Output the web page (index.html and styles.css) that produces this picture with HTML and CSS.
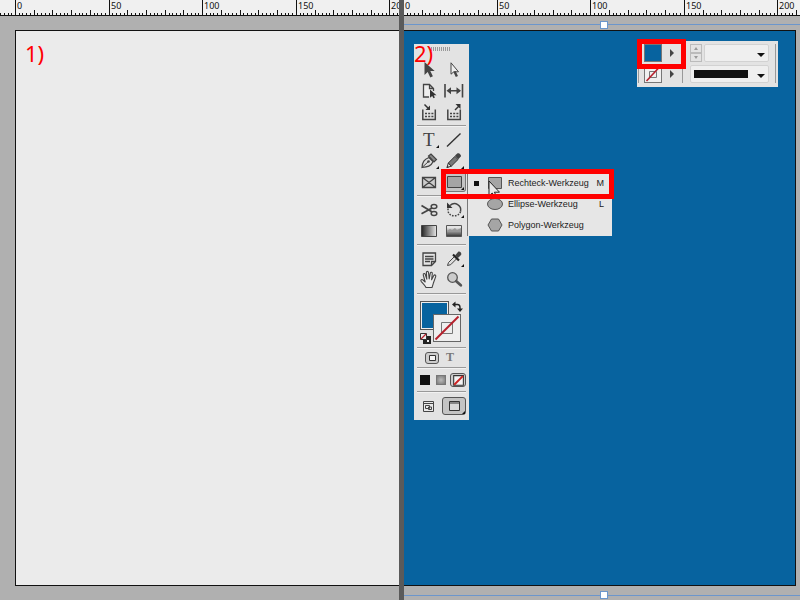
FILE: index.html
```html
<!DOCTYPE html>
<html lang="de">
<head>
    <meta charset="UTF-8">
    <meta name="viewport" content="width=device-width, initial-scale=1.0">
    <title>Rechteck-Werkzeug</title>
    <link rel="stylesheet" href="styles.css">
</head>
<body>
    <!-- Schritt 1: leere Seite -->
    <section class="pane">
        <svg class="ruler" data-origin="15"></svg>
        <div class="page">
            <span class="step">1)</span>
        </div>
    </section>

    <div class="divider"></div>

    <!-- Schritt 2: Seite mit blauem Rechteck -->
    <section class="pane pane-right">
        <svg class="ruler" data-origin="-1"></svg>
        <div class="page page-blue"></div>
        <div class="frame"></div>

        <!-- Werkzeugleiste -->
        <div class="toolbox">
            <div class="grip"></div>
            <div class="tools">
                <button aria-label="Auswahl"><svg viewBox="0 0 25 21"><path fill="#444" d="M8.5 3v13l3.2-3 2.6 5.5 2.6-1.2-2.6-5.2h4.4z"/></svg></button>
                <button aria-label="Direktauswahl"><svg viewBox="0 0 25 21"><path fill="#eee" stroke="#444" d="M10 3.800v11.400l2.800-2.400h4.700z"/><path stroke="#444" stroke-width="2.400" d="M13.500 12.500l2.400 5"/></svg></button>
                <button aria-label="Seite"><svg viewBox="0 0 25 21"><path fill="#eee" stroke="#444" stroke-width="1.300" d="M13 17H7.500V4.500h6l4 4V11M13.500 4.500v4h4"/><path fill="#333" d="M14 9.500v8.300l2.200-1.900 1.300 2.400 1.400-.8-1.200-2.300h2.800z"/></svg></button>
                <button aria-label="Lücke"><svg viewBox="0 0 25 21"><path stroke="#444" stroke-width="1.600" d="M4 4v13.500M21.500 4v13.500M7 10.700h12"/><path fill="#444" d="M5.500 10.700l4.500-3.500v7zM20 10.700l-4.500-3.500v7z"/></svg></button>
                <button aria-label="Inhaltsaufnahme"><svg viewBox="0 0 25 21"><path fill="none" stroke="#444" stroke-width="1.500" d="M6.800 8.500v10h12.500v-10"/><path stroke="#444" stroke-width="1.500" stroke-dasharray="2 1.200" d="M9 12.500h8.500M9 15.500h8.500"/><path stroke="#333" stroke-width="1.500" d="M8.500 3.500l3.500 3.500"/><path fill="#333" d="M14 9V4.500L9.500 9z"/></svg></button>
                <button aria-label="Inhaltsplatzierung"><svg viewBox="0 0 25 21"><path fill="none" stroke="#444" stroke-width="1.500" d="M6.800 8.500v10h12.500v-10"/><path stroke="#444" stroke-width="1.500" stroke-dasharray="2 1.200" d="M9 12.500h8.500M9 15.500h8.500"/><path stroke="#333" stroke-width="1.500" d="M14 9l4-4"/><path fill="#333" d="M19.500 3v5l-5-5z"/></svg></button>
            </div>
            <hr>
            <div class="tools">
                <button class="more" aria-label="Text"><svg viewBox="0 0 25 21"><text class="type-icon" x="7" y="17">T</text></svg></button>
                <button aria-label="Linienzeichner"><svg viewBox="0 0 25 21"><path stroke="#333" stroke-width="1.400" d="M6 17.500L19.500 4.500"/></svg></button>
                <button class="more" aria-label="Zeichenstift"><svg viewBox="0 0 25 21"><path fill="#ddd" stroke="#444" stroke-width="1.200" d="M6 17.500c.5-5.500 2-8 7-10l4 4.200c-2 4.500-5.500 5.300-11 5.800z"/><path stroke="#444" d="M6 17.500l6.500-6"/><circle cx="12.500" cy="11.500" r="1.300" fill="#444"/><path fill="#888" stroke="#444" stroke-width="1.200" d="M12.500 6l2.500-2 5.500 5.500-2.500 2.500z"/></svg></button>
                <button class="more" aria-label="Buntstift"><svg viewBox="0 0 25 21"><path fill="#ddd" stroke="#333" d="M6 17.500l1.300-4.500 3 3.200z"/><path fill="#777" stroke="#333" d="M7.300 13l6.700-6.700 3 3.200-6.700 6.700z"/><path fill="#444" d="M14 5.500l2.500-2.200c1.500-.8 4.200 1.700 3.300 3.300l-2.500 2.600z"/><path fill="#333" d="M5.500 18l.8-2.300 1.600 1.600z"/></svg></button>
                <button aria-label="Rechteckrahmen"><svg viewBox="0 0 25 21"><path fill="#ccc" stroke="#444" stroke-width="1.300" d="M6.500 6.500h13v10h-13zM6.500 6.500l13 10M19.500 6.500l-13 10"/></svg></button>
                <button class="more active" aria-label="Rechteck"><svg viewBox="0 0 25 21"><path fill="#a5a5a5" stroke="#444" d="M6.500 5.500h14v11h-14z"/></svg></button>
            </div>
            <hr>
            <div class="tools">
                <button aria-label="Schere"><svg viewBox="0 0 25 21"><path stroke="#444" stroke-width="1.800" d="M5.500 6.500L17 13.500M5.500 14.800L17 8.500"/><g fill="#e3e3e3" stroke="#444" stroke-width="1.500"><ellipse cx="18" cy="7.500" rx="2.800" ry="2"/><ellipse cx="18" cy="14.500" rx="2.800" ry="2"/></g></svg></button>
                <button class="more" aria-label="Drehen"><svg viewBox="0 0 25 21"><path fill="none" stroke="#444" stroke-width="1.500" d="M9 6.500c5-4.500 12 0 10.500 6"/><path fill="none" stroke="#444" stroke-width="1.500" stroke-dasharray="1.600 1.300" d="M19.500 12.500c-1.500 6-12 6-12.500-1V9"/><path fill="#333" d="M6 3.500v5.500h5.500z"/></svg></button>
                <button aria-label="Verlaufsfarbfeld"><svg viewBox="0 0 25 21"><defs><linearGradient id="g1"><stop stop-color="#222"/><stop offset="1" stop-color="#e8e8e8"/></linearGradient></defs><path fill="url(#g1)" stroke="#444" d="M5.500 5.500h15v11h-15z"/></svg></button>
                <button aria-label="Weiche Verlaufskante"><svg viewBox="0 0 25 21"><defs><linearGradient id="g2" x2="0" y2="1"><stop offset=".2" stop-color="#e4e4e4"/><stop offset="1" stop-color="#333"/></linearGradient></defs><path fill="url(#g2)" stroke="#555" d="M5.500 5.500h15v11h-15z"/><path fill="#999" d="M6 11l3-2 2 1 3-2 2 2 4-2v3z"/></svg></button>
            </div>
            <hr>
            <div class="tools">
                <button aria-label="Notiz"><svg viewBox="0 0 25 21"><path fill="#e6e6e6" stroke="#444" stroke-width="1.300" d="M7 5h12.500v8.500l-4 4H7zM19.500 13.500h-4v4"/><path stroke="#444" stroke-width="1.300" d="M9 8.500h8.500M9 11h8.500M9 13.500h5"/></svg></button>
                <button class="more" aria-label="Pipette"><svg viewBox="0 0 25 21"><path fill="#ddd" stroke="#444" d="M6.500 17.500l1-3 6-6 2.200 2.200-6 6z"/><path stroke="#222" stroke-width="2.200" d="M12 6.500l6 6"/><path fill="#444" d="M14 7.500l3-3.500c1.500-1.300 4.300 1 3 3l-3.300 3.300z"/></svg></button>
                <button aria-label="Hand"><svg viewBox="0 0 25 21"><path fill="#eee" stroke="#444" stroke-width="1.100" stroke-linejoin="round" d="M10 18.500c-1-2.500-3.700-4.500-4.900-6.300-.8-1.300.8-2.300 1.900-1.200l2.200 2L7.300 6c-.4-1.600 1.500-2.100 2-.5l1.500 4.700-.4-6.700c0-1.500 1.900-1.500 2.100 0l.7 6.400 1.100-5.700c.3-1.500 2.200-1.200 2 .4l-.7 6.200 2.200-4.200c.8-1.300 2.400-.4 1.900 1l-2.200 6.100c-.5 2-.9 3-1.500 4.800z"/></svg></button>
                <button aria-label="Zoom"><svg viewBox="0 0 25 21"><circle cx="11.500" cy="8.500" r="4.800" fill="#ccc" stroke="#555" stroke-width="1.300"/><path stroke="#555" stroke-width="2.800" stroke-linecap="round" d="M15.300 12.300l4.500 4"/></svg></button>
            </div>
            <hr>
            <div class="colors">
                <button class="fill" aria-label="Fläche"></button>
                <button class="stroke" aria-label="Kontur"><svg viewBox="0 0 28 28"><path fill="none" stroke="#777" d="M8.500 8.500h11v11h-11z"/><path stroke="#b5202c" stroke-width="2" d="M2.500 25.500l23-23"/></svg></button>
                <button class="swap" aria-label="Fläche und Kontur tauschen"><svg viewBox="0 0 11 11"><path fill="none" stroke="#222" stroke-width="1.400" d="M2.500 3.500h3q2.500 0 2.500 3v1.500"/><path fill="#222" d="M0 3.500L3.500.5v6zM8 11L5 7.500h6z"/></svg></button>
                <button class="default" aria-label="Standardfläche und -kontur"><svg viewBox="0 0 11 11"><path fill="#222" d="M3 3h8v8H3z"/><path fill="#eee" d="M7 7h2v2H7z"/><path fill="#eee" stroke="#333" d="M.5.500h6v6h-6z"/><path stroke="#b5202c" stroke-width="1.300" d="M1 6l5-5"/></svg></button>
            </div>
            <hr>
            <div class="row row-target">
                <button class="framed" aria-label="Formatierung wirkt sich auf Rahmen aus"><svg viewBox="0 0 12 10"><path fill="#f3f3f3" stroke="#333" d="M3.500 2.500h6v5h-6z"/></svg></button>
                <button class="letter" aria-label="Formatierung wirkt sich auf Text aus">T</button>
            </div>
            <hr>
            <div class="row row-apply">
                <button class="apply-color" aria-label="Farbe anwenden"></button>
                <button class="apply-gradient" aria-label="Verlauf anwenden"></button>
                <button class="framed apply-none" aria-label="Keine anwenden"><svg viewBox="0 0 13 12"><path fill="#f3f3f3" stroke="#333" d="M2.500 1.500h9v9h-9z"/><path stroke="#c22" stroke-width="1.800" d="M3 10l8-8"/></svg></button>
            </div>
            <hr>
            <div class="row row-view">
                <button class="view" aria-label="Ansichtsoptionen"><svg viewBox="0 0 11 11"><path fill="#e8e8e8" stroke="#444" d="M.5.500h10v10H.5z"/><path stroke="#444" d="M1 2.500h9"/><path fill="none" stroke="#444" d="M2.500 4.500h4v3h-4zM5.500 6h3v2.500h-3z"/></svg></button>
                <button class="framed screen more" aria-label="Bildschirmmodus"><svg viewBox="0 0 11 10"><path fill="#d8d8d8" stroke="#333" d="M.5.500h10v9H.5z"/><path stroke="#333" d="M1 2h9"/></svg></button>
            </div>
        </div>

        <!-- Ausklappmenü der Formwerkzeuge -->
        <div class="flyout">
            <button class="item current">
                <svg viewBox="0 0 16 14"><path fill="#a5a5a5" stroke="#555" d="M1.500 1.500h13v11h-13z"/></svg>
                <span>Rechteck-Werkzeug</span><kbd>M</kbd>
            </button>
            <button class="item">
                <svg viewBox="0 0 16 14"><ellipse cx="8" cy="7" rx="7.500" ry="5.500" fill="#a5a5a5" stroke="#555"/></svg>
                <span>Ellipse-Werkzeug</span><kbd>L</kbd>
            </button>
            <button class="item">
                <svg viewBox="0 0 16 14"><path fill="#a5a5a5" stroke="#555" d="M4.500 1h7L15 7l-3.500 6h-7L1 7z"/></svg>
                <span>Polygon-Werkzeug</span>
            </button>
        </div>
        <svg class="cursor" viewBox="0 0 12 18"><path fill="#e8e8e8" stroke="#222" d="M1 1v15l3.200-3 2.600 5 2-1-2.400-4.800H11.500z"/></svg>

        <!-- Steuerungsbedienfeld: Fläche und Kontur -->
        <div class="control">
            <div class="swatches">
                <button class="swatch swatch-blue" aria-label="Fläche"></button>
                <button class="arrow" aria-label="Flächenfarben"></button>
                <button class="swatch" aria-label="Kontur"><svg viewBox="0 0 16 16"><path fill="none" stroke="#777" d="M4.500 5.500h7v6h-7z"/><path stroke="#b5202c" stroke-width="1.600" d="M1.500 15L14.500 1"/></svg></button>
                <button class="arrow" aria-label="Konturfarben"></button>
            </div>
            <div class="weights">
                <div class="line">
                    <div class="spinner">
                        <button class="up" aria-label="Konturstärke erhöhen"></button>
                        <button class="down" aria-label="Konturstärke verringern"></button>
                    </div>
                    <div class="combo"><select aria-label="Konturstärke"><option></option></select></div>
                </div>
                <div class="combo combo-style"><select aria-label="Konturtyp"><option></option></select></div>
            </div>
        </div>

        <span class="step step-two">2)</span>
        <div class="mark mark-tool"></div>
        <div class="mark mark-fill"></div>
    </section>

    <script>
        // Lineale: alle 2 mm ein Strich, alle 50 mm eine Zahl
        const pxPerMm = 93.6 / 50;
        const ns = 'http://www.w3.org/2000/svg';

        function drawRuler(ruler) {
            const origin = Number(ruler.dataset.origin);
            const width = ruler.clientWidth;
            ruler.innerHTML = '';
            for (let mm = -10; origin + mm * pxPerMm < width; mm += 2) {
                const x = Math.round(origin + mm * pxPerMm);
                const height = mm % 50 === 0 ? 16 : mm % 10 === 0 ? 6 : 3;
                const tick = document.createElementNS(ns, 'rect');
                tick.setAttribute('x', x);
                tick.setAttribute('y', 16 - height);
                tick.setAttribute('width', 1);
                tick.setAttribute('height', height);
                ruler.appendChild(tick);
                if (mm % 50 === 0) {
                    const label = document.createElementNS(ns, 'text');
                    label.setAttribute('x', x + 2);
                    label.setAttribute('y', 9);
                    label.textContent = mm;
                    ruler.appendChild(label);
                }
            }
        }

        function drawRulers() {
            document.querySelectorAll('.ruler').forEach(drawRuler);
        }

        window.addEventListener('resize', drawRulers);
        drawRulers();
    </script>
</body>
</html>
```
FILE: styles.css
```css
* {
    box-sizing: border-box;
}
body {
    margin: 0;
    height: 100vh;
    display: grid;
    grid-template-columns: calc(50% - 1px) 5px 1fr;
    overflow: hidden;
    font-family: "Noto Sans", sans-serif;
    font-size: 9px;
    color: #222;
}
button {
    display: block;
    margin: 0;
    padding: 0;
    border: none;
    background: none;
    font: inherit;
    color: inherit;
}
svg {
    display: block;
}

/* Dokumentfenster */
.pane {
    position: relative;
    display: flex;
    flex-direction: column;
    min-width: 0;
    background: #b0b0b0;
}
.divider {
    background: #5a5a5a;
}
.ruler {
    width: 100%;
    height: 16px;
    flex: none;
    background: #f0f0f0;
    border-bottom: 1px solid #111;
    fill: #111;
}
.page {
    flex: 1;
    margin: 14px 0 14px 15px;
    padding: 7px 9px;
    background: #ebebeb;
    border: 1px solid #111;
    border-right: none;
}
.page-blue {
    margin: 14px 4px 14px 0;
    background: #07639f;
    border-left: none;
    border-right: 1px solid #111;
}
.step {
    display: block;
    font-size: 22px;
    line-height: 30px;
    color: #f00;
}
.step-two {
    position: absolute;
    left: 10px;
    top: 38px;
}

/* Auswahlrahmen */
.frame {
    position: absolute;
    inset: 24px 0 4px;
    border: solid #6b96cc;
    border-width: 1px 0;
    pointer-events: none;
}
.frame::before,
.frame::after {
    content: "";
    position: absolute;
    left: calc(50% - 2px);
    width: 6px;
    height: 6px;
    background: #fff;
    border: 1px solid #6b96cc;
}
.frame::before {
    top: -4px;
}
.frame::after {
    bottom: -4px;
}

/* Werkzeugleiste */
.toolbox {
    position: absolute;
    left: 10px;
    top: 44px;
    width: 55px;
    padding: 3px 3px 3px 2px;
    background: #e3e3e3;
}
.toolbox hr {
    height: 2px;
    margin: 3px 0 2px 1px;
    border: none;
    border-top: 1px solid #999;
    background: #f2f2f2;
}
.grip {
    width: 20px;
    height: 4px;
    margin: 0 auto 8px;
    background: repeating-linear-gradient(90deg, #999 0 1px, #e3e3e3 1px 2px);
}
.tools {
    display: grid;
    grid-template-columns: 1fr 1fr;
    grid-auto-rows: 21px;
}
.tools svg {
    width: 25px;
    height: 21px;
    fill: none;
}
.more {
    position: relative;
}
.more::after {
    content: "";
    position: absolute;
    right: 2px;
    bottom: 2px;
    border-left: 3px solid transparent;
    border-bottom: 3px solid #111;
}
.active {
    background: #c4c4c4;
    border-radius: 3px;
    box-shadow: inset 0 0 0 1px #777;
}
.type-icon {
    font-family: "Liberation Serif", serif;
    font-size: 19px;
    fill: #444;
}

/* Farbfelder */
.colors {
    position: relative;
    height: 47px;
}
.colors button {
    position: absolute;
}
.colors .fill {
    left: 4px;
    top: 4px;
    width: 29px;
    height: 29px;
    background: #07639f;
    border: 1px solid #555;
    box-shadow: inset 0 0 0 1px #eee;
}
.colors .stroke {
    left: 17px;
    top: 17px;
    width: 28px;
    height: 28px;
    background: #eee;
    outline: 1px solid #666;
    outline-offset: -1px;
}
.colors .swap {
    left: 36px;
    top: 4px;
    width: 11px;
}
.colors .default {
    left: 4px;
    top: 36px;
    width: 11px;
}
.row {
    display: flex;
    align-items: center;
}
.row-target {
    height: 13px;
    padding-left: 9px;
    gap: 7px;
}
.row-apply {
    height: 17px;
    padding-left: 4px;
    gap: 6px;
}
.row-view {
    height: 22px;
    padding-left: 7px;
    gap: 8px;
}
.framed {
    width: 14px;
    height: 12px;
    border: 1px solid #555;
    border-radius: 3px;
    background: #ccc;
}
.letter {
    font-family: "Liberation Serif", serif;
    font-size: 12px;
    font-weight: bold;
    line-height: 13px;
    color: #777;
}
.apply-color,
.apply-gradient {
    width: 10px;
    height: 10px;
    background: #111;
}
.apply-gradient {
    background: radial-gradient(#bbb, #777);
    border: 1px solid #777;
}
.apply-none {
    width: 16px;
    height: 14px;
    margin-left: -2px;
}
.view {
    width: 11px;
}
.screen {
    width: 24px;
    height: 18px;
    background: #c4c4c4;
}
.screen svg {
    width: 11px;
    margin: 0 auto;
}
.screen::after {
    right: 0;
    bottom: 0;
}

/* Ausklappmenü */
.flyout {
    position: absolute;
    left: 63px;
    top: 172px;
    width: 145px;
    padding-bottom: 1px;
    background: #e6e6e6;
    border-left: 1px solid #777;
    font-family: "Liberation Sans", sans-serif;
}
.item {
    position: relative;
    display: flex;
    align-items: center;
    width: 100%;
    height: 21px;
    padding: 0 8px 0 19px;
    gap: 5px;
    text-align: left;
    white-space: nowrap;
}
.item svg {
    flex: none;
    width: 16px;
    height: 14px;
}
.item kbd {
    margin-left: auto;
    font: inherit;
}
.current::before {
    content: "";
    position: absolute;
    left: 6px;
    top: 9px;
    width: 5px;
    height: 5px;
    background: #111;
}
.cursor {
    position: absolute;
    left: 84px;
    top: 180px;
    width: 12px;
    height: 18px;
}

/* Steuerungsbedienfeld */
.control {
    position: absolute;
    right: 22px;
    top: 41px;
    display: flex;
    gap: 7px;
    padding: 3px 2px 4px 1px;
    background: #e3e3e3;
}
.swatches {
    display: grid;
    grid-template-columns: 18px 20px;
    grid-template-rows: 18px 18px;
    gap: 3px 0;
    padding-left: 5px;
    border: solid #999;
    border-width: 0 1px;
}
.swatch {
    border: 1px solid #777;
    background: #f0f0f0;
}
.swatch-blue {
    background: #07639f;
}
.arrow::before {
    content: "";
    display: block;
    width: 0;
    margin-left: 8px;
    border: 4px solid transparent;
    border-left-color: #444;
    border-right: none;
}
.weights {
    display: flex;
    flex-direction: column;
    gap: 3px;
    width: 86px;
    padding-right: 6px;
    border-right: 1px solid #999;
}
.line {
    display: flex;
    gap: 2px;
}
.spinner button {
    display: flex;
    align-items: center;
    justify-content: center;
    width: 12px;
    height: 9px;
    border: 1px solid #bbb;
}
.spinner button::before {
    content: "";
    border: 2px solid transparent;
}
.spinner .up::before {
    border-top: none;
    border-bottom: 3px solid #999;
}
.spinner .down::before {
    border-bottom: none;
    border-top: 3px solid #999;
}
.combo {
    position: relative;
    flex: 1;
    height: 18px;
}
.combo select {
    display: block;
    width: 100%;
    height: 18px;
    appearance: none;
    border: 1px solid #d2d2d2;
    border-radius: 2px;
    background: #efefef;
}
.combo::after {
    content: "";
    position: absolute;
    right: 4px;
    top: 9px;
    border: 4px solid transparent;
    border-top: 4px solid #111;
    border-bottom: none;
    pointer-events: none;
}
.combo-style::before {
    content: "";
    position: absolute;
    inset: 5px 21px 5px 4px;
    background: #111;
    pointer-events: none;
}

/* Rote Markierungen */
.mark {
    position: absolute;
    border: 5px solid #f00;
    pointer-events: none;
}
.mark-tool {
    left: 37px;
    top: 169px;
    width: 173px;
    height: 30px;
}
.mark-fill {
    right: 114px;
    top: 39px;
    width: 49px;
    height: 30px;
}
```
